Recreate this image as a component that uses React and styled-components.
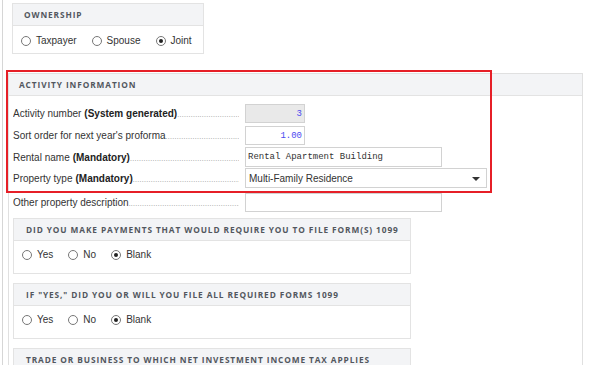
import React from "react";
import styled, { createGlobalStyle } from "styled-components";

const Global = createGlobalStyle`
  html, body { margin: 0; padding: 0; background: #fff; overflow: hidden; }
  body { font-family: "Liberation Sans", Arial, sans-serif; font-size: 10px; color: #333; }
`;

const Page = styled.div`
  position: relative;
  margin-left: 2px;
  border-left: 1px solid #d6d6d6;
  height: 365px;
  overflow: hidden;
  padding-top: 3px;
  box-sizing: border-box;
`;

const Panel = styled.div`
  border: 1px solid #e3e3e3;
  background: #fff;
  width: ${(p) => p.$w}px;
  margin-left: ${(p) => p.$ml || 0}px;
  margin-top: ${(p) => p.$mt || 0}px;
  box-sizing: border-box;
  flex-shrink: 0;
`;

const Header = styled.div`
  height: ${(p) => p.$h || 21}px;
  background: #f3f4f6;
  border-bottom: 1px solid #e3e3e3;
  display: flex;
  align-items: center;
  padding-left: ${(p) => p.$pl || 11}px;
  font-family: "Open Sans", "Liberation Sans", sans-serif;
  font-weight: 700;
  font-size: 8.3px;
  letter-spacing: 0.9px;
  color: #52575e;
  white-space: nowrap;
`;

const RadioBody = styled.div`
  height: ${(p) => p.$h}px;
  display: flex;
  align-items: flex-start;
  padding-top: ${(p) => p.$pt}px;
  padding-left: ${(p) => p.$pl}px;
  box-sizing: border-box;
`;

const Option = styled.label`
  display: flex;
  align-items: center;
  gap: 5px;
  margin-right: 15px;
  font-size: 10px;
  color: #333;
  line-height: 12px;
`;

const Circle = styled.span`
  width: 10px;
  height: 10px;
  border: 1px solid #777;
  border-radius: 50%;
  box-sizing: border-box;
  display: flex;
  align-items: center;
  justify-content: center;
  background: #fff;
  &::after {
    content: "";
    width: 4px;
    height: 4px;
    border-radius: 50%;
    background: ${(p) => (p.$on ? "#222" : "transparent")};
  }
`;

const Radio = ({ label, on }) => (
  <Option>
    <Circle $on={on} />
    {label}
  </Option>
);

const Activity = styled(Panel)`
  border-color: #e0e0e0;
  min-height: 400px;
`;

const ActBody = styled.div`
  padding: 8px 0 0 4px;
  display: flex;
  flex-direction: column;
`;

const Row = styled.div`
  display: flex;
  align-items: center;
  height: ${(p) => p.$h}px;
  margin-top: ${(p) => p.$mt || 0}px;
`;

const Label = styled.div`
  width: 232px;
  display: flex;
  align-items: baseline;
  padding-right: 6px;
  box-sizing: border-box;
  white-space: nowrap;
  overflow: hidden;
  font-size: 10px;
  color: #333;
  b { font-weight: 700; margin-left: 3px; color: #222; }
`;

const Leader = styled.span`
  flex: 1;
  overflow: hidden;
  color: #8a8a8a;
  font-size: 7px;
  letter-spacing: 0.3px;
  &::after {
    content: "..................................................................................................................................";
  }
`;

const Input = styled.div`
  width: ${(p) => p.$w}px;
  height: ${(p) => p.$h}px;
  border: 1px solid #d2d2d2;
  box-sizing: border-box;
  background: ${(p) => (p.$gray ? "#e9e9e9" : "#fff")};
  font-family: "Liberation Mono", "Courier New", monospace;
  font-size: 9px;
  color: ${(p) => (p.$num ? "#4b4bf0" : "#333")};
  display: flex;
  align-items: center;
  justify-content: ${(p) => (p.$num ? "flex-end" : "flex-start")};
  padding: 0 2px;
`;

const Select = styled.div`
  width: 242px;
  height: 20px;
  border: 1px solid #d2d2d2;
  box-sizing: border-box;
  display: flex;
  align-items: center;
  justify-content: space-between;
  padding: 0 6px 0 3px;
  font-size: 10px;
  color: #333;
`;

const Caret = styled.span`
  width: 0;
  height: 0;
  border-left: 4px solid transparent;
  border-right: 4px solid transparent;
  border-top: 4px solid #333;
  margin-top: 1px;
`;

const Highlight = styled.div`
  position: absolute;
  left: 3px;
  top: 70px;
  width: 486px;
  height: 123px;
  border: 2px solid #e61f27;
  box-sizing: border-box;
  pointer-events: none;
`;

const EmptyBody = styled.div`
  height: 32px;
`;

const Question = ({ title, mt, radios = true }) => (
  <Panel $w={398} $mt={mt}>
    <Header $pl={12}>{title}</Header>
    {radios ? (
      <RadioBody $h={32} $pt={8} $pl={8}>
        <Radio label="Yes" />
        <Radio label="No" />
        <Radio label="Blank" on />
      </RadioBody>
    ) : (
      <EmptyBody />
    )}
  </Panel>
);

export default function App() {
  return (
    <>
      <Global />
      <Page>
        <Panel $w={192} $ml={9}>
          <Header>OWNERSHIP</Header>
          <RadioBody $h={27} $pt={9} $pl={8}>
            <Radio label="Taxpayer" />
            <Radio label="Spouse" />
            <Radio label="Joint" on />
          </RadioBody>
        </Panel>

        <Activity $w={575} $ml={5} $mt={19}>
          <Header $h={21} $pl={10}>ACTIVITY INFORMATION</Header>
          <ActBody>
            <Row $h={19}>
              <Label>Activity number<b>(System generated)</b><Leader /></Label>
              <Input $w={60} $h={19} $gray $num>3</Input>
            </Row>
            <Row $h={19} $mt={3}>
              <Label>Sort order for next year's proforma<Leader /></Label>
              <Input $w={60} $h={19} $num>1.00</Input>
            </Row>
            <Row $h={20} $mt={2}>
              <Label>Rental name<b>(Mandatory)</b><Leader /></Label>
              <Input $w={197} $h={20}>Rental Apartment Building</Input>
            </Row>
            <Row $h={20} $mt={1}>
              <Label>Property type<b>(Mandatory)</b><Leader /></Label>
              <Select>
                Multi-Family Residence
                <Caret />
              </Select>
            </Row>
            <Row $h={19} $mt={5}>
              <Label>Other property description<Leader /></Label>
              <Input $w={197} $h={19} />
            </Row>
            <Question mt={6} title="DID YOU MAKE PAYMENTS THAT WOULD REQUIRE YOU TO FILE FORM(S) 1099" />
            <Question mt={9} title={'IF "YES," DID YOU OR WILL YOU FILE ALL REQUIRED FORMS 1099'} />
            <Question mt={9} radios={false} title="TRADE OR BUSINESS TO WHICH NET INVESTMENT INCOME TAX APPLIES" />
          </ActBody>
        </Activity>
        <Highlight />
      </Page>
    </>
  );
}
